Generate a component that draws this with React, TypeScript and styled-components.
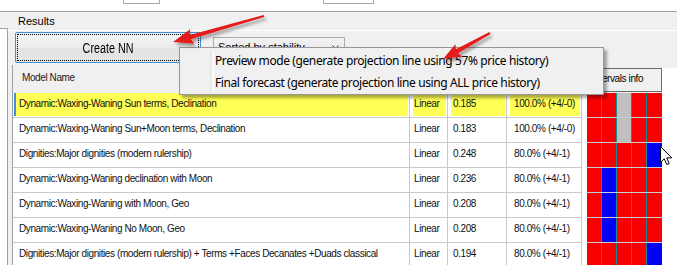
import React from "react";
import styled, { createGlobalStyle } from "styled-components";

const GlobalStyle = createGlobalStyle`
  html, body { margin: 0; padding: 0; background: #fff; }
  body { font-family: "Liberation Sans", Arial, sans-serif; color: #000; }
  * { box-sizing: border-box; }
`;

const Page = styled.div`
  position: relative;
  width: 677px;
  height: 265px;
  overflow: hidden;
  background: #fff;
  display: flex;
  flex-direction: column;
`;

const TopStrip = styled.div`
  height: 11px;
  flex: none;
  display: flex;
  align-items: flex-start;
  padding-left: 123px;
  gap: 163px;
`;

const StubInput = styled.div<{ $w: number }>`
  width: ${(p) => p.$w}px;
  height: 4px;
  border: 1px solid #a9a9a9;
  border-top: none;
  background: #fff;
`;

const Frame = styled.div`
  flex: 1;
  min-height: 0;
  display: flex;
  border-top: 1px solid #a0a0a0;
  background: #f0f0f0;
`;

const LeftPane = styled.div`
  width: 8px;
  flex: none;
  margin-top: 16px;
  background: #fff;
  border-top: 1px solid #a0a0a0;
  border-right: 1px solid #a0a0a0;
`;

const ResultsGroup = styled.div`
  flex: 1;
  min-width: 0;
  display: flex;
  flex-direction: column;
`;

const GroupHead = styled.div`
  height: 19px;
  flex: none;
  padding-left: 10px;
  font-size: 11px;
  line-height: 18px;
  border-bottom: 1px solid #fff;
`;

const Toolbar = styled.div`
  height: 34px;
  flex: none;
  display: flex;
  align-items: flex-start;
  padding: 1px 0 0 7px;
`;

const Button = styled.button`
  position: relative;
  width: 186px;
  height: 31px;
  padding: 1px 0 0;
  margin: 0;
  border: 1px solid #3d8fd6;
  border-radius: 2px;
  background: linear-gradient(#f5f5f5, #ececec 50%, #e3e3e3 51%, #e6e6e6);
  font-family: "Liberation Sans", Arial, sans-serif;
  color: #000;
  &::after {
    content: "";
    position: absolute;
    inset: 1px;
    border: 1px dotted #000;
  }
`;

const ButtonLabel = styled.span`
  display: inline-block;
  font-size: 14px;
  transform: scaleX(0.77);
`;

const Combo = styled.div`
  margin: 5px 0 0 12px;
  width: 132px;
  height: 21px;
  border: 1px solid #acacac;
  background: linear-gradient(#f2f2f2, #e6e6e6);
  display: flex;
  align-items: center;
  justify-content: space-between;
  padding: 0 5px 1px 4px;
  font-size: 11px;
`;

const Table = styled.div`
  flex: 1;
  margin-left: 4px;
  background: #fff;
  border-left: 1px solid #a0a0a0;
  display: flex;
  flex-direction: column;
`;

const COLS = "397px 38px 59px 75px 5px 75px 1fr";

const HeaderRow = styled.div`
  height: 28px;
  flex: none;
  display: grid;
  grid-template-columns: ${COLS};
  background: #f0f0f0;
`;

const HeaderCell = styled.div<{ $span: number }>`
  grid-column: span ${(p) => p.$span};
  display: flex;
  align-items: center;
  padding: 0 0 4px 9px;
  font-size: 10px;
  letter-spacing: -0.4px;
  color: #1a1a1a;
`;

const IntervalsHeader = styled.div`
  margin-top: 3px;
  height: 24px;
  border: 1px solid #6a6a6a;
  background: #f0f0f0;
  display: flex;
  align-items: center;
  padding: 0 0 3px 4px;
  font-size: 10px;
  letter-spacing: -0.4px;
  white-space: nowrap;
`;

const HeaderFiller = styled.div`
  margin-top: 3px;
  background: #fff;
`;

const Row = styled.div`
  height: 25px;
  flex: none;
  display: grid;
  grid-template-columns: ${COLS};
`;

const Cell = styled.div`
  border-right: 1px solid #c9c9c9;
  border-bottom: 1px solid #c9c9c9;
  display: flex;
  min-width: 0;
  overflow: hidden;
`;

const Fill = styled.div<{ $sel: boolean; $ml: number; $pl: number; $bar?: boolean }>`
  flex: 1;
  min-width: 0;
  margin: 0 1px 1px ${(p) => p.$ml}px;
  padding: 0 0 3px ${(p) => p.$pl}px;
  display: flex;
  align-items: center;
  white-space: nowrap;
  font-size: 10px;
  letter-spacing: -0.4px;
  color: #111;
  background: ${(p) => (p.$sel ? "#ffff55" : "transparent")};
  border-left: ${(p) => (p.$bar ? "2px solid #3f8ee4" : "none")};
`;

const Gap = styled.div``;

const Strip = styled.div`
  display: flex;
  border-bottom: 1px solid #c4d0d4;
`;

const Swatch = styled.div<{ $c: string }>`
  width: 15px;
  background: ${(p) => p.$c};
  border-right: 1px solid #1e8a8a;
  &:last-child {
    border-right: none;
  }
`;

const Menu = styled.div`
  position: absolute;
  left: 179px;
  top: 47px;
  width: 425px;
  padding: 1px 2px;
  background: #f0f0f0;
  border: 1px solid #979797;
  box-shadow: 3px 3px 3px rgba(0, 0, 0, 0.35);
  &::before {
    content: "";
    position: absolute;
    left: 30px;
    top: 2px;
    bottom: 2px;
    width: 2px;
    border-left: 1px solid #e2e3e3;
    border-right: 1px solid #fff;
  }
`;

const MenuItem = styled.div`
  height: 22px;
  display: flex;
  align-items: center;
  padding: 1px 0 0 33px;
  font-family: "Noto Sans", "Open Sans", sans-serif;
  font-size: 12px;
  letter-spacing: -0.4px;
  color: #000;
  white-space: nowrap;
`;

const Overlay = styled.svg`
  position: absolute;
  left: 0;
  top: 0;
  pointer-events: none;
`;

const Cursor = styled.svg`
  position: absolute;
  left: 660px;
  top: 146px;
`;

type RowData = { name: string; v: string; p: string; bars: string; sel?: boolean };

const rows: RowData[] = [
  { name: "Dynamic:Waxing-Waning Sun terms, Declination", v: "0.185", p: "100.0% (+4/-0)", bars: "RRGRR", sel: true },
  { name: "Dynamic:Waxing-Waning Sun+Moon terms, Declination", v: "0.183", p: "100.0% (+4/-0)", bars: "RRGRR" },
  { name: "Dignities:Major dignities (modern rulership)", v: "0.248", p: "80.0% (+4/-1)", bars: "RRRRB" },
  { name: "Dynamic:Waxing-Waning declination with Moon", v: "0.236", p: "80.0% (+4/-1)", bars: "RBRRR" },
  { name: "Dynamic:Waxing-Waning with Moon, Geo", v: "0.208", p: "80.0% (+4/-1)", bars: "RBRRR" },
  { name: "Dynamic:Waxing-Waning No Moon, Geo", v: "0.208", p: "80.0% (+4/-1)", bars: "RBRRR" },
  {
    name: "Dignities:Major dignities (modern rulership) + Terms +Faces Decanates +Duads classical",
    v: "0.194",
    p: "80.0% (+4/-1)",
    bars: "RRRRB",
  },
];

const colorOf: Record<string, string> = { R: "#f80000", B: "#0000f8", G: "#c0c0c0" };

function Arrow({ x1, y1, x2, y2, head, half }: { x1: number; y1: number; x2: number; y2: number; head: number; half: number }) {
  const dx = x2 - x1;
  const dy = y2 - y1;
  const len = Math.hypot(dx, dy);
  const ux = dx / len;
  const uy = dy / len;
  const px = -uy;
  const py = ux;
  const bx = x2 - ux * head;
  const by = y2 - uy * head;
  const tw = 1;
  const hw = 2.2;
  const pts = [
    [x1 + px * tw, y1 + py * tw],
    [bx + ux * 2 + px * hw, by + uy * 2 + py * hw],
    [bx + px * half, by + py * half],
    [x2, y2],
    [bx - px * half, by - py * half],
    [bx + ux * 2 - px * hw, by + uy * 2 - py * hw],
    [x1 - px * tw, y1 - py * tw],
  ]
    .map((q) => q.map((n) => n.toFixed(1)).join(","))
    .join(" ");
  return <polygon points={pts} fill="#e41e1b" filter="url(#sh)" />;
}

export default function App() {
  return (
    <>
      <GlobalStyle />
      <Page>
        <TopStrip>
          <StubInput $w={37} />
          <StubInput $w={51} />
        </TopStrip>
        <Frame>
          <LeftPane />
          <ResultsGroup>
            <GroupHead>Results</GroupHead>
            <Toolbar>
              <Button>
                <ButtonLabel>Create NN</ButtonLabel>
              </Button>
              <Combo>
                <span>Sorted by stability</span>
                <svg width="7" height="4" viewBox="0 0 7 4">
                  <polyline points="0.5,0.5 3.5,3.5 6.5,0.5" fill="none" stroke="#333" strokeWidth="1" />
                </svg>
              </Combo>
            </Toolbar>
            <Table>
              <HeaderRow>
                <HeaderCell $span={5}>Model Name</HeaderCell>
                <IntervalsHeader>Intervals info</IntervalsHeader>
                <HeaderFiller />
              </HeaderRow>
              {rows.map((r, i) => {
                const sel = !!r.sel;
                return (
                  <Row key={i}>
                    <Cell>
                      <Fill $sel={sel} $ml={1} $pl={sel ? 3 : 5} $bar={sel}>
                        {r.name}
                      </Fill>
                    </Cell>
                    <Cell>
                      <Fill $sel={sel} $ml={3} $pl={1}>
                        Linear
                      </Fill>
                    </Cell>
                    <Cell>
                      <Fill $sel={sel} $ml={3} $pl={2}>
                        {r.v}
                      </Fill>
                    </Cell>
                    <Cell>
                      <Fill $sel={sel} $ml={3} $pl={4}>
                        {r.p}
                      </Fill>
                    </Cell>
                    <Gap />
                    <Strip>
                      {r.bars.split("").map((b, j) => (
                        <Swatch key={j} $c={colorOf[b]} />
                      ))}
                    </Strip>
                    <Gap />
                  </Row>
                );
              })}
            </Table>
          </ResultsGroup>
        </Frame>

        <Menu>
          <MenuItem>Preview mode (generate projection line using 57% price history)</MenuItem>
          <MenuItem>Final forecast (generate projection line using ALL price history)</MenuItem>
        </Menu>

        <Overlay width="677" height="265" viewBox="0 0 677 265">
          <defs>
            <filter id="sh" x="-20%" y="-50%" width="140%" height="200%">
              <feDropShadow dx="2" dy="3" stdDeviation="1.6" floodColor="#000" floodOpacity="0.35" />
            </filter>
          </defs>
          <Arrow x1={264} y1={16} x2={173} y2={42} head={20} half={7.5} />
          <Arrow x1={490} y1={33} x2={443} y2={59} head={18} half={7} />
        </Overlay>

        <Cursor width="13" height="20" viewBox="0 0 13 20">
          <path d="M0.5,0.5 L0.5,16.5 L4.3,12.8 L6.8,18.6 L9.2,17.6 L6.8,11.9 L11.8,11.9 Z" fill="#fff" stroke="#000" strokeWidth="1" />
        </Cursor>
      </Page>
    </>
  );
}
